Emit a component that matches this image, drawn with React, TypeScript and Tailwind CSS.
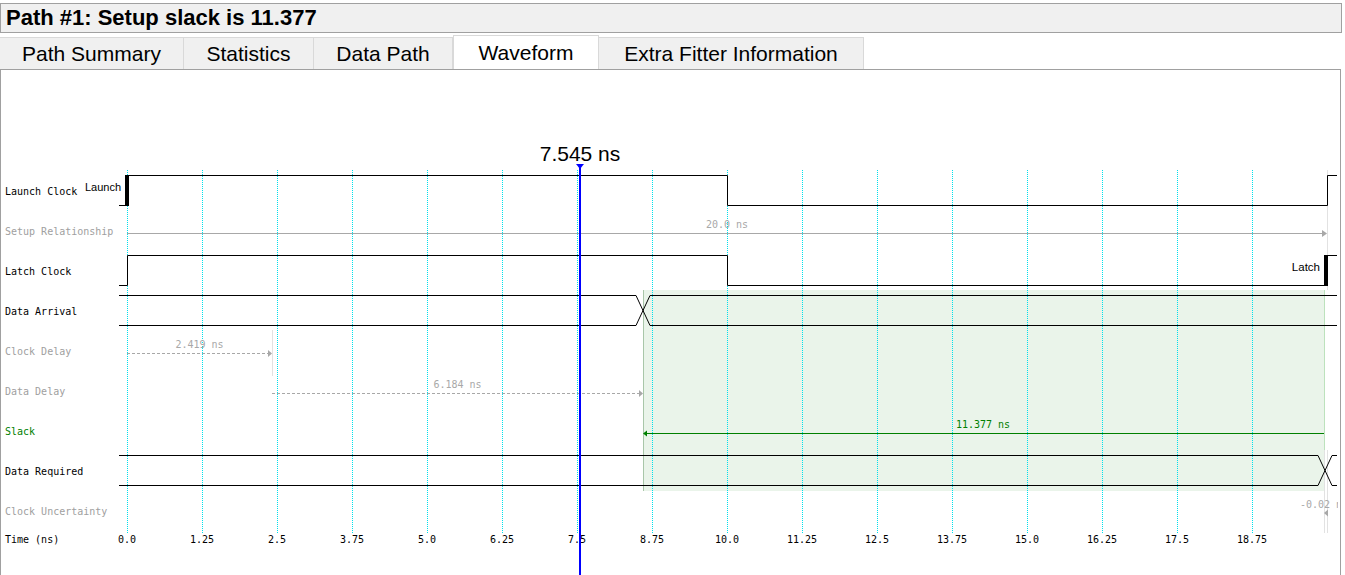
const TICKS = ['0.0', '1.25', '2.5', '3.75', '5.0', '6.25', '7.5', '8.75', '10.0', '11.25', '12.5', '13.75', '15.0', '16.25', '17.5', '18.75'];

const TABS = [
  { name: 'Path Summary', w: 'w-[184px]' },
  { name: 'Statistics', w: 'w-[130px]' },
  { name: 'Data Path', w: 'w-[139px]' },
  { name: 'Waveform', w: 'w-[146px]', active: true },
  { name: 'Extra Fitter Information', w: 'w-[265px]' },
];

const ROWS = [
  { label: 'Launch Clock', color: 'text-black' },
  { label: 'Setup Relationship', color: 'text-[#a0a0a0]' },
  { label: 'Latch Clock', color: 'text-black' },
  { label: 'Data Arrival', color: 'text-black' },
  { label: 'Clock Delay', color: 'text-[#a0a0a0]' },
  { label: 'Data Delay', color: 'text-[#a0a0a0]' },
  { label: 'Slack', color: 'text-[#008000]' },
  { label: 'Data Required', color: 'text-black' },
  { label: 'Clock Uncertainty', color: 'text-[#a0a0a0]' },
];

const x = (ns: number) => 127 + ns * 60;

function Waveform() {
  const gray = '#a8a8a8';
  return (
    <svg
      width={1255}
      height={505}
      viewBox="85 70 1255 505"
      className="block shrink-0 font-['DejaVu_Sans_Mono',monospace] text-[10px]"
    >
      <defs>
        <clipPath id="plot">
          <rect x={85} y={70} width={1253} height={505} />
        </clipPath>
      </defs>
      <g clipPath="url(#plot)">
        {/* slack region */}
        <rect x={643} y={290} width={681} height={201} fill="#eaf4ea" />
        <line x1={643.5} y1={290} x2={643.5} y2={491} stroke="#a9c6a9" />
        <line x1={1324.5} y1={290} x2={1324.5} y2={491} stroke="#bde2bd" />

        {/* grid */}
        {TICKS.map((t, i) => (
          <g key={t}>
            <line
              x1={x(i * 1.25) + 0.5}
              y1={170}
              x2={x(i * 1.25) + 0.5}
              y2={533}
              stroke="#00e0ec"
              strokeDasharray="1 1"
              shapeRendering="crispEdges"
            />
            <text x={x(i * 1.25)} y={543} textAnchor="middle" fill="#000">
              {t}
            </text>
          </g>
        ))}

        {/* faint marker lines */}
        <line x1={1327.5} y1={170} x2={1327.5} y2={290} stroke="#e2e2e2" />
        <line x1={272.5} y1={330} x2={272.5} y2={376} stroke="#e2e2e2" />
        <line x1={1324.5} y1={450} x2={1324.5} y2={533} stroke="#e2e2e2" />
        <line x1={1327.5} y1={450} x2={1327.5} y2={533} stroke="#e2e2e2" />

        <g fill="none" stroke="#000" strokeWidth={1}>
          {/* launch clock */}
          <path d="M119 205.5 H127.5 V175.5 H727.5 V205.5 H1327.5 V175.5 H1337" />
          {/* latch clock */}
          <path d="M119 285.5 H127.5 V255.5 H727.5 V285.5 H1327.5 V255.5 H1337" />
          {/* data arrival */}
          <path d="M119 295.5 H636 L650 325.5 H1337" />
          <path d="M119 325.5 H636 L650 295.5 H1337" />
          {/* data required */}
          <path d="M119 455.5 H1318 L1332 485.5 H1337" />
          <path d="M119 485.5 H1318 L1332 455.5 H1337" />
        </g>
        <rect x={125} y={175} width={4} height={31} fill="#000" />
        <rect x={1324} y={255} width={4} height={31} fill="#000" />
        <text x={121} y={191} textAnchor="end" fontFamily="'Liberation Sans', sans-serif" fontSize={11} fill="#000">
          Launch
        </text>
        <text x={1320} y={271} textAnchor="end" fontFamily="'Liberation Sans', sans-serif" fontSize={11.5} fill="#000">
          Latch
        </text>

        {/* setup relationship */}
        <line x1={127} y1={233.5} x2={1323} y2={233.5} stroke={gray} />
        <polygon points="1322,230 1327,233.5 1322,237" fill={gray} />
        <text x={727} y={228} textAnchor="middle" fill={gray}>20.0 ns</text>

        {/* clock delay */}
        <line x1={127} y1={353.5} x2={268} y2={353.5} stroke={gray} strokeDasharray="3 2" />
        <polygon points="268,350 272,353.5 268,357" fill={gray} />
        <text x={199.5} y={348} textAnchor="middle" fill={gray}>2.419 ns</text>

        {/* data delay */}
        <line x1={272} y1={393.5} x2={639} y2={393.5} stroke={gray} strokeDasharray="3 2" />
        <polygon points="639,390 643,393.5 639,397" fill={gray} />
        <text x={457.5} y={388} textAnchor="middle" fill={gray}>6.184 ns</text>

        {/* slack */}
        <line x1={646} y1={433.5} x2={1324} y2={433.5} stroke="#008000" />
        <polygon points="643,433.5 647,430.5 647,436.5" fill="#008000" />
        <text x={983} y={428} textAnchor="middle" fill="#008000">11.377 ns</text>

        {/* clock uncertainty */}
        <text x={1300} y={508} fill={gray}>-0.02 ns</text>
        <polygon points="1324,513 1328,509.5 1328,516.5" fill={gray} />

        {/* cursor */}
        <line x1={580} y1={166} x2={580} y2={575} stroke="#0000ff" strokeWidth={2} />
        <polygon points="576,164 584,164 580,169" fill="#0000ff" />
        <text x={580} y={161} textAnchor="middle" fontFamily="'Liberation Sans', sans-serif" fontSize={21} fill="#000">
          7.545 ns
        </text>
      </g>
    </svg>
  );
}

export default function App() {
  return (
    <div className="w-[1345px] h-[575px] overflow-hidden bg-white font-['Liberation_Sans',sans-serif]">
      <div className="mt-[3px] w-[1342px] h-[30px] border border-[#a0a0a0] bg-[#f0f0f0] px-[5px] flex items-center">
        <span className="text-[22px] font-bold text-black leading-none">Path #1: Setup slack is 11.377</span>
      </div>

      <div className="mt-[2px] h-[34px] flex items-end">
        {TABS.map((tab) =>
          tab.active ? (
            <div
              key={tab.name}
              className={`${tab.w} h-[34px] bg-white border border-b-0 border-[#d9d9d9] flex items-center justify-center text-[21px] text-black`}
            >
              {tab.name}
            </div>
          ) : (
            <div
              key={tab.name}
              className={`${tab.w} h-[32px] bg-[#f0f0f0] border-t border-r border-[#d9d9d9] flex items-center justify-center text-[21px] text-black`}
            >
              {tab.name}
            </div>
          )
        )}
      </div>

      <div className="w-[1341px] h-[506px] border-t border-l border-r border-[#a0a0a0] flex">
        <div className="w-[84px] shrink-0 pt-[101px] font-['DejaVu_Sans_Mono',monospace] text-[10px]">
          {ROWS.map((r) => (
            <div key={r.label} className={`h-[40px] pl-[4px] flex items-center whitespace-nowrap ${r.color}`}>
              {r.label}
            </div>
          ))}
          <div className="h-[16px] pl-[4px] flex items-center whitespace-nowrap text-black">Time (ns)</div>
        </div>
        <Waveform />
      </div>
    </div>
  );
}
